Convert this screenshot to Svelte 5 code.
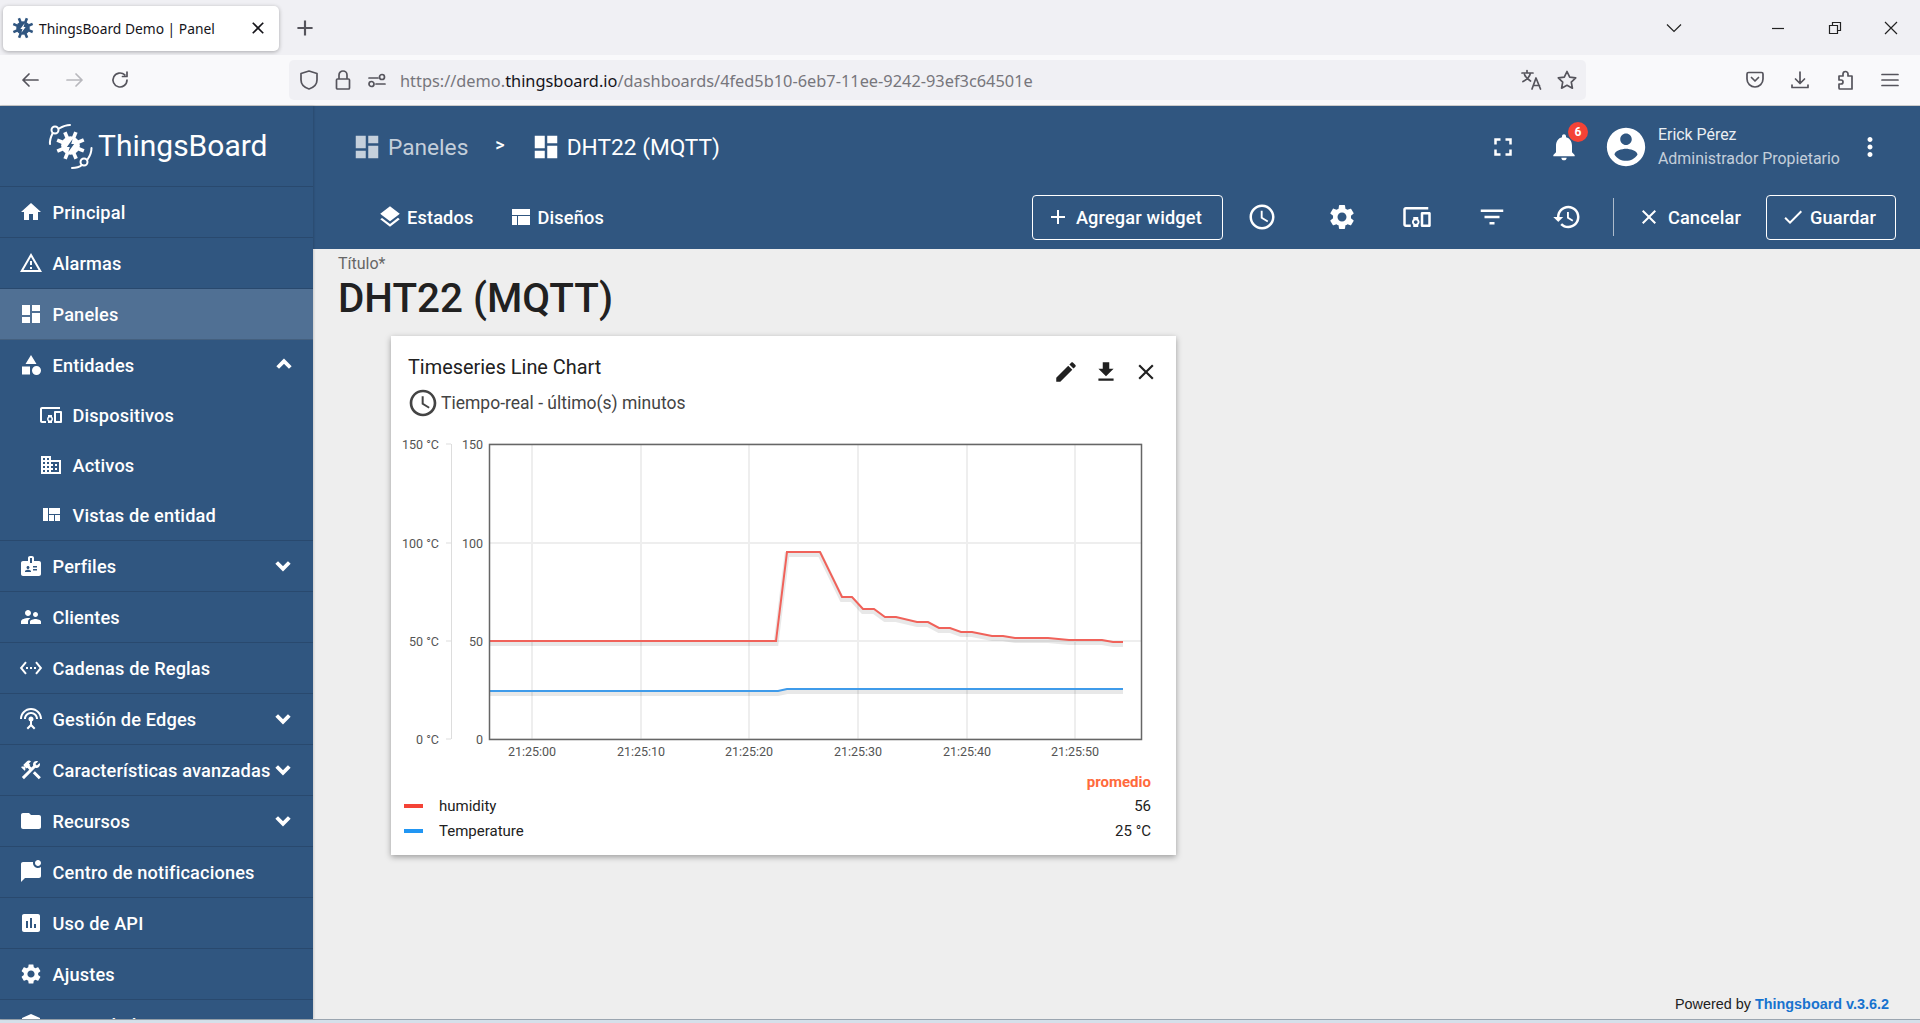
<script>
const I = {
  home: 'M10 20v-6h4v6h5v-8h3L12 3 2 12h3v8z',
  warning: 'M12 5.99L19.53 19H4.47L12 5.99M12 2L1 21h22L12 2zm1 14h-2v2h2v-2zm0-6h-2v4h2v-4z',
  dashboard: 'M3 13h8V3H3v10zm0 8h8v-6H3v6zm10 0h8V11h-8v10zm0-18v6h8V3h-8z',
  category: 'M12 2l-5.5 9h11zM17.5 13a4.5 4.5 0 1 0 0 9 4.5 4.5 0 0 0 0-9zM3 13.5h8v8H3z',
  devices: 'M3 6h18V4H3c-1.1 0-2 .9-2 2v12c0 1.1.9 2 2 2h4v-2H3V6zm10 6H9v1.78c-.61.55-1 1.33-1 2.22s.39 1.67 1 2.22V20h4v-1.78c.61-.55 1-1.34 1-2.22s-.39-1.67-1-2.22V12zm-2 5.5c-.83 0-1.5-.67-1.5-1.5s.67-1.5 1.5-1.5 1.5.67 1.5 1.5-.67 1.5-1.5 1.5zM22 8h-6c-.5 0-1 .5-1 1v10c0 .5.5 1 1 1h6c.5 0 1-.5 1-1V9c0-.5-.5-1-1-1zm-1 10h-4v-8h4v8z',
  domain: 'M12 7V3H2v18h20V7H12zM6 19H4v-2h2v2zm0-4H4v-2h2v2zm0-4H4V9h2v2zm0-4H4V5h2v2zm4 12H8v-2h2v2zm0-4H8v-2h2v2zm0-4H8V9h2v2zm0-4H8V5h2v2zm10 12h-8v-2h2v-2h-2v-2h2v-2h-2V9h8v10zm-2-8h-2v2h2v-2zm0 4h-2v2h2v-2z',
  quilt: 'M10 18h5v-6h-5v6zm-6 0h5V5H4v13zm12 0h5v-6h-5v6zM10 5v6h11V5H10z',
  badge: 'M20 7h-5V4c0-1.1-.9-2-2-2h-2c-1.1 0-2 .9-2 2v3H4c-1.1 0-2 .9-2 2v11c0 1.1.9 2 2 2h16c1.1 0 2-.9 2-2V9c0-1.1-.9-2-2-2zM9 12c.83 0 1.5.67 1.5 1.5S9.83 15 9 15s-1.5-.67-1.5-1.5S8.17 12 9 12zm3 6H6v-.75c0-1 2-1.5 3-1.5s3 .5 3 1.5V18zm1-9h-2V4h2v5zm5 7.5h-4V15h4v1.5zm0-3h-4V12h4v1.5z',
  people: 'M16.5 12c1.38 0 2.49-1.12 2.49-2.5S17.88 7 16.5 7C15.12 7 14 8.12 14 9.5s1.12 2.5 2.5 2.5zM9 11c1.66 0 2.99-1.34 2.99-3S10.66 5 9 5C7.34 5 6 6.34 6 8s1.34 3 3 3zm7.5 3c-1.83 0-5.5.92-5.5 2.75V19h11v-2.25c0-1.83-3.67-2.75-5.5-2.75zM9 13c-2.33 0-7 1.17-7 3.5V19h7v-2.25c0-.85.33-2.34 2.37-3.47C10.5 13.1 9.66 13 9 13z',
  rules: 'M7.77 6.76L6.23 5.48.82 12l5.41 6.52 1.54-1.28L3.42 12l4.35-5.24zM7 13h2v-2H7v2zm10-2h-2v2h2v-2zm-6 2h2v-2h-2v2zm6.77-7.52l-1.54 1.28L20.58 12l-4.35 5.24 1.54 1.28L23.18 12l-5.41-6.52z',
  antenna: 'M12 5c-3.87 0-7 3.13-7 7h2c0-2.76 2.24-5 5-5s5 2.24 5 5h2c0-3.87-3.13-7-7-7zm1 9.29c.88-.39 1.5-1.26 1.5-2.29 0-1.38-1.12-2.5-2.5-2.5S9.5 10.62 9.5 12c0 1.02.62 1.9 1.5 2.29v3.3L7.59 21 9 22.41l3-3 3 3L16.41 21 13 17.59v-3.3zM12 1C5.93 1 1 5.93 1 12h2c0-4.97 4.03-9 9-9s9 4.03 9 9h2c0-6.07-4.93-11-11-11z',
  tools: 'M13.78 15.3l6 6 2.11-2.16-6-6zM17.5 10c1.93 0 3.5-1.57 3.5-3.5 0-.58-.16-1.12-.41-1.6l-2.7 2.7-1.49-1.49 2.7-2.7c-.48-.25-1.02-.41-1.6-.41C15.57 3 14 4.57 14 6.5c0 .41.08.8.21 1.16l-1.85 1.85-1.78-1.78.71-.71-1.41-1.41L12 3.49c-1.17-1.17-3.07-1.17-4.24 0L4.22 7.03l1.41 1.41H2.81l-.71.71 3.54 3.54.71-.71V9.15l1.41 1.41.71-.71 1.78 1.78-7.41 7.41 2.12 2.12L16.34 9.79c.36.13.75.21 1.16.21z',
  folder: 'M10 4H4c-1.1 0-1.99.9-1.99 2L2 18c0 1.1.9 2 2 2h16c1.1 0 2-.9 2-2V8c0-1.1-.9-2-2-2h-8l-2-2z',
  chat: 'M22 6.98V16c0 1.1-.9 2-2 2H6l-4 4V4c0-1.1.9-2 2-2h10.1c-.06.32-.1.66-.1 1 0 2.76 2.24 5 5 5 1.13 0 2.16-.39 3-1.02zM16 3c0 1.66 1.34 3 3 3s3-1.34 3-3-1.34-3-3-3-3 1.34-3 3z',
  chart: 'M19 3H5c-1.1 0-2 .9-2 2v14c0 1.1.9 2 2 2h14c1.1 0 2-.9 2-2V5c0-1.1-.9-2-2-2zM9 17H7v-7h2v7zm4 0h-2V7h2v10zm4 0h-2v-4h2v4z',
  settings: 'M19.14 12.94c.04-.3.06-.61.06-.94 0-.32-.02-.64-.07-.94l2.03-1.58c.18-.14.23-.41.12-.61l-1.92-3.32c-.12-.22-.37-.29-.59-.22l-2.39.96c-.5-.38-1.03-.7-1.62-.94l-.36-2.54c-.04-.24-.24-.41-.48-.41h-3.84c-.24 0-.43.17-.47.41l-.36 2.54c-.59.24-1.13.57-1.62.94l-2.39-.96c-.22-.08-.47 0-.59.22L2.74 8.87c-.12.21-.08.47.12.61l2.03 1.58c-.05.3-.09.63-.09.94s.02.64.07.94l-2.03 1.58c-.18.14-.23.41-.12.61l1.92 3.32c.12.22.37.29.59.22l2.39-.96c.5.38 1.03.7 1.62.94l.36 2.54c.05.24.24.41.48.41h3.84c.24 0 .44-.17.47-.41l.36-2.54c.59-.24 1.13-.56 1.62-.94l2.39.96c.22.08.47 0 .59-.22l1.92-3.32c.12-.22.07-.47-.12-.61l-2.01-1.58zM12 15.6c-1.98 0-3.6-1.62-3.6-3.6s1.62-3.6 3.6-3.6 3.6 1.62 3.6 3.6-1.62 3.6-3.6 3.6z',
  more: 'M16.59 8.59L12 13.17 7.41 8.59 6 10l6 6 6-6z',
  less: 'M12 8l-6 6 1.41 1.41L12 10.83l4.59 4.58L18 14z',
  layers: 'M11.99 18.54l-7.37-5.73L3 14.07l9 7 9-7-1.63-1.27-7.38 5.74zM12 16l7.36-5.73L21 9l-9-7-9 7 1.63 1.27L12 16z',
  table: 'M3 4h18v6H3zM3 11h5v9H3zM9 11h12v9H9z',
  add: 'M19 13h-6v6h-2v-6H5v-2h6V5h2v6h6v2z',
  schedule: 'M11.99 2C6.47 2 2 6.48 2 12s4.47 10 9.99 10C17.52 22 22 17.52 22 12S17.52 2 11.99 2zM12 20c-4.42 0-8-3.58-8-8s3.58-8 8-8 8 3.58 8 8-3.58 8-8 8zm.5-13H11v6l5.25 3.15.75-1.23-4.5-2.67z',
  filter: 'M10 18h4v-2h-4v2zM3 6v2h18V6H3zm3 7h12v-2H6v2z',
  history: 'M13 3c-4.97 0-9 4.03-9 9H1l3.89 3.89.07.14L9 12H6c0-3.87 3.13-7 7-7s7 3.13 7 7-3.13 7-7 7c-1.93 0-3.68-.79-4.94-2.06l-1.42 1.42C8.27 19.99 10.51 21 13 21c4.97 0 9-4.03 9-9s-4.03-9-9-9zm-1 5v5l4.28 2.54.72-1.21-3.5-2.08V8H12z',
  close: 'M19 6.41L17.59 5 12 10.59 6.41 5 5 6.41 10.59 12 5 17.59 6.41 19 12 13.41 17.59 19 19 17.59 13.41 12z',
  check: 'M9 16.17L4.83 12l-1.42 1.41L9 19 21 7l-1.41-1.41z',
  fullscreen: 'M7 14H5v5h5v-2H7v-3zm-2-4h2V7h3V5H5v5zm12 7h-3v2h5v-5h-2v3zM14 5v2h3v3h2V5h-5z',
  bell: 'M12 22c1.1 0 2-.9 2-2h-4c0 1.1.89 2 2 2zm6-6v-5c0-3.07-1.64-5.64-4.5-6.32V4c0-.83-.67-1.5-1.5-1.5s-1.5.67-1.5 1.5v.68C7.63 5.36 6 7.92 6 11v5l-2 2v1h16v-1l-2-2z',
  account: 'M12 2C6.48 2 2 6.48 2 12s4.48 10 10 10 10-4.48 10-10S17.52 2 12 2zm0 3c1.66 0 3 1.34 3 3s-1.34 3-3 3-3-1.34-3-3 1.34-3 3-3zm0 14.2c-2.5 0-4.71-1.28-6-3.22.03-1.99 4-3.08 6-3.08 1.99 0 5.97 1.09 6 3.08-1.29 1.94-3.5 3.22-6 3.22z',
  dots: 'M12 8c1.1 0 2-.9 2-2s-.9-2-2-2-2 .9-2 2 .9 2 2 2zm0 2c-1.1 0-2 .9-2 2s.9 2 2 2 2-.9 2-2-.9-2-2-2zm0 6c-1.1 0-2 .9-2 2s.9 2 2 2 2-.9 2-2-.9-2-2-2z',
  edit: 'M3 17.25V21h3.75L17.81 9.94l-3.75-3.75L3 17.25zM20.71 7.04c.39-.39.39-1.02 0-1.41l-2.34-2.34c-.39-.39-1.02-.39-1.41 0l-1.83 1.83 3.75 3.75 1.83-1.83z',
  download: 'M19 9h-4V3H9v6H5l7 7 7-7zM5 18v2h14v-2H5z',
  security: 'M12 1L3 5v6c0 5.55 3.84 10.74 9 12 5.16-1.26 9-6.45 9-12V5l-9-4z'
};

const menu = [
  { label: 'Principal', icon: 'home' },
  { label: 'Alarmas', icon: 'warning' },
  { label: 'Paneles', icon: 'dashboard', active: true },
  { label: 'Entidades', icon: 'category', open: true, children: [
    { label: 'Dispositivos', icon: 'devices' },
    { label: 'Activos', icon: 'domain' },
    { label: 'Vistas de entidad', icon: 'quilt' }
  ] },
  { label: 'Perfiles', icon: 'badge', arrow: true },
  { label: 'Clientes', icon: 'people' },
  { label: 'Cadenas de Reglas', icon: 'rules' },
  { label: 'Gestión de Edges', icon: 'antenna', arrow: true },
  { label: 'Características avanzadas', icon: 'tools', arrow: true },
  { label: 'Recursos', icon: 'folder', arrow: true },
  { label: 'Centro de notificaciones', icon: 'chat' },
  { label: 'Uso de API', icon: 'chart' },
  { label: 'Ajustes', icon: 'settings' },
  { label: 'Seguridad', icon: 'security' }
];

const humidity = '490,641 776,641 787,552 820,552 842,597 852,597 863,609 874,609 885,617 896,617 917,622 928,622 939,628 950,628 961,632 972,632 992,636 1003,636 1015,638 1048,638 1069,640 1102,640 1113,642 1123,642';
const temperature = '490,691 778,691 787,689 1123,689';
const gridX = [532, 641, 749, 858, 967, 1075];
const xLabels = ['21:25:00', '21:25:10', '21:25:20', '21:25:30', '21:25:40', '21:25:50'];
const gridY = [
  { y: 444, a: '150', b: '150 °C' },
  { y: 543, a: '100', b: '100 °C' },
  { y: 641, a: '50', b: '50 °C' },
  { y: 739, a: '0', b: '0 °C' }
];
const teeth = [0, 45, 90, 135, 180, 225, 270, 315];
</script>

{#snippet icon(name, size = 24)}
  <svg class="icon" width={size} height={size} viewBox="0 0 24 24" fill="currentColor"><path d={I[name]} /></svg>
{/snippet}

{#snippet gear(fill, bolt)}
  <g fill={fill}>
    <circle cx="0" cy="0" r="13" />
    {#each teeth as t}
      <rect x="-2.5" y="-20" width="5" height="9" transform="rotate({t + 22})" />
    {/each}
  </g>
  <path d="M3 -9 L-5 2 L-1 2 L-3 9 L5 -2 L1 -2 Z" fill={bolt} />
{/snippet}

<div class="window">
  <div class="tabbar">
    <div class="tab">
      <svg class="favicon" width="22" height="22" viewBox="-21 -21 42 42">{@render gear('#305680', '#fff')}</svg>
      <span class="tab-title">ThingsBoard Demo | Panel</span>
      <span class="tab-close">{@render icon('close', 20)}</span>
    </div>
    <span class="new-tab">{@render icon('add', 26)}</span>
    <div class="win-controls">
      <svg class="tab-list" width="16" height="10" viewBox="0 0 16 10"><path d="M1 1.5l7 7 7-7" /></svg>
      <svg class="win-btn" width="14" height="14" viewBox="0 0 14 14"><path d="M1 7.5h12" /></svg>
      <svg class="win-btn" width="14" height="14" viewBox="0 0 14 14"><path d="M1.5 4.5h8v8h-8zM4.5 4.5v-3h8v8h-3" /></svg>
      <svg class="win-btn" width="14" height="14" viewBox="0 0 14 14"><path d="M1 1l12 12M13 1L1 13" /></svg>
    </div>
  </div>

  <div class="navbar">
    <div class="nav-left">
      <svg width="20" height="20" viewBox="0 0 20 20"><path d="M18 10H3M9 4l-6 6 6 6" /></svg>
      <svg class="faded" width="20" height="20" viewBox="0 0 20 20"><path d="M2 10h15M11 4l6 6-6 6" /></svg>
      <svg width="20" height="20" viewBox="0 0 20 20"><path d="M17 10a7 7 0 1 1-2.2-5.1M17 2v4.5h-4.5" /></svg>
    </div>
    <div class="urlbar">
      <svg width="20" height="22" viewBox="0 0 20 22"><path d="M10 2l8 2.5v6.5c0 4.500-3.500 7.500-8 9-4.500-1.500-8-4.500-8-9V4.500z" /></svg>
      <svg width="18" height="22" viewBox="0 0 18 22"><path d="M5 10V6a4 4 0 0 1 8 0v4M3.500 10h11a1 1 0 0 1 1 1v8a1 1 0 0 1-1 1h-11a1 1 0 0 1-1-1v-8a1 1 0 0 1 1-1z" /></svg>
      <svg width="20" height="18" viewBox="0 0 20 18"><path d="M2 7h9M9 13h9" /><circle cx="15" cy="6" r="2.500" /><circle cx="4.500" cy="13" r="2.500" /></svg>
      <span class="url">https://demo.<b>thingsboard.io</b>/dashboards/4fed5b10-6eb7-11ee-9242-93ef3c64501e</span>
      <svg class="translate" width="22" height="22" viewBox="0 0 22 22"><path d="M1 4h11M6 1.500V4M9.500 4c-.8 3.500-3.500 6.500-7.500 8.500M3.500 5.500c1 3 3.500 5 6 6.500M11 20l4-11 4.500 11M12.500 16.500h6" /></svg>
      <svg class="star" width="22" height="22" viewBox="0 0 22 22"><path d="M11 2.500l2.700 5.600 6 .8-4.400 4.200 1.100 6.100L11 16.300 5.600 19.200l1.100-6.100-4.400-4.200 6-.8z" /></svg>
    </div>
    <div class="nav-right">
      <svg width="20" height="20" viewBox="0 0 20 20"><path d="M3.500 2.500h13a1.500 1.500 0 0 1 1.500 1.500v5a8 8 0 0 1-16 0V4a1.500 1.500 0 0 1 1.500-1.500zM6.500 7.500L10 11l3.500-3.500" /></svg>
      <svg width="20" height="20" viewBox="0 0 20 20"><path d="M10 2v11M5.500 9l4.500 4.500L14.500 9M2 15v2.500h16V15" /></svg>
      <svg width="20" height="22" viewBox="0 0 20 22"><path d="M4 7h4V5a2.500 2.500 0 0 1 5 0v2h4v13H5a1 1 0 0 1-1-1v-4h2a2 2 0 0 0 0-4H4z" /></svg>
      <svg width="20" height="20" viewBox="0 0 20 20"><path d="M2 4.500h16M2 10h16M2 15.500h16" /></svg>
    </div>
  </div>

  <div class="app">
    <aside class="sidebar">
      <div class="logo">
        <svg width="48" height="48" viewBox="47 122 48 48">
          <g transform="translate(70.500 145.500) scale(.72)">{@render gear('#fff', '#305680')}</g>
          <path class="orbit" d="M50 144c-.5-4 .8-7 2.500-10.500M59 128.500c3.500-2 7-3.500 11-3.500M72 168c4 0 7.500-1 10-3M87.500 159.500c2.500-3.500 4-7.500 4-11.500" />
          <circle class="orbit" cx="55" cy="130" r="3.500" />
          <circle class="orbit" cx="84" cy="162" r="3.500" />
        </svg>
        <span>ThingsBoard</span>
      </div>
      {#each menu as item}
        <div class="row" class:active={item.active} class:open={item.open}>
          <div class="row-main">
            {@render icon(item.icon)}
            <span class="row-label">{item.label}</span>
            {#if item.arrow || item.open}
              <span class="chevron" class:up={item.open}>{@render icon(item.open ? 'less' : 'more', 26)}</span>
            {/if}
          </div>
          {#each item.children ?? [] as child}
            <div class="row-child">
              {@render icon(child.icon)}
              <span class="row-label">{child.label}</span>
            </div>
          {/each}
        </div>
      {/each}
    </aside>

    <div class="main">
      <header class="header">
        <div class="top">
          <div class="crumb faded-crumb">{@render icon('dashboard', 30)}<span>Paneles</span></div>
          <span class="crumb-sep">&gt;</span>
          <div class="crumb">{@render icon('dashboard', 30)}<span>DHT22 (MQTT)</span></div>
          <div class="top-actions">
            <span class="icon-btn">{@render icon('fullscreen', 30)}</span>
            <span class="icon-btn bell">
              {@render icon('bell', 32)}
              <span class="badge">6</span>
            </span>
            <span class="avatar">{@render icon('account', 46)}</span>
            <div class="user">
              <div class="user-name">Erick Pérez</div>
              <div class="user-role">Administrador Propietario</div>
            </div>
            <span class="icon-btn">{@render icon('dots', 30)}</span>
          </div>
        </div>
        <div class="bottom">
          <span class="tool">{@render icon('layers', 26)}Estados</span>
          <span class="tool tool-second">{@render icon('table', 24)}Diseños</span>
          <div class="tool-right">
            <span class="outline add-btn">{@render icon('add', 24)}Agregar widget</span>
            <span class="icon-btn clock">{@render icon('schedule', 30)}</span>
            <span class="icon-btn gear-btn">{@render icon('settings', 30)}</span>
            <span class="icon-btn spaced">{@render icon('devices', 30)}</span>
            <span class="icon-btn spaced">{@render icon('filter', 30)}</span>
            <span class="icon-btn spaced">{@render icon('history', 30)}</span>
            <span class="divider"></span>
            <span class="tool cancel">{@render icon('close', 24)}Cancelar</span>
            <span class="outline save-btn">{@render icon('check', 24)}Guardar</span>
          </div>
        </div>
      </header>

      <div class="content">
        <div class="title-label">Título*</div>
        <h1 class="title">DHT22 (MQTT)</h1>

        <section class="card">
          <div class="card-head">
            <div class="card-text">
              <div class="card-title">Timeseries Line Chart</div>
              <div class="card-sub">{@render icon('schedule', 32)}<span>Tiempo-real - último(s) minutos</span></div>
            </div>
            <div class="card-actions">
              {@render icon('edit', 26)}
              {@render icon('download', 26)}
              {@render icon('close', 26)}
            </div>
          </div>

          <svg class="plot" width="785" height="335" viewBox="391 430 785 335">
            {#each gridX as x}
              <line class="grid" x1={x} x2={x} y1="444" y2="739" />
            {/each}
            {#each gridY as g}
              <line class="grid" class:grid-h={g.y === 543 || g.y === 641} x1="489" x2="1142" y1={g.y} y2={g.y} />
              <line class="grid" x1="446" x2="451" y1={g.y} y2={g.y} />
              <text class="tick" x="439" y={g.y + 4.5} text-anchor="end">{g.b}</text>
              <text class="tick" x="483" y={g.y + 4.5} text-anchor="end">{g.a}</text>
            {/each}
            <line class="grid" x1="451.500" x2="451.500" y1="444" y2="739" />
            {#each xLabels as label, i}
              <text class="tick" x={gridX[i]} y="756" text-anchor="middle">{label}</text>
            {/each}
            <polyline class="shadow" points={humidity} transform="translate(0 2.500)" />
            <polyline class="shadow" points={temperature} transform="translate(0 2.500)" />
            <polyline class="series" points={humidity} stroke="#f0625a" />
            <polyline class="series" points={temperature} stroke="#3f9bea" />
            <rect class="frame" x="489.500" y="444.500" width="652" height="295" />
          </svg>

          <div class="legend">
            <div class="legend-head">promedio</div>
            <div class="legend-row"><i class="swatch red"></i><span>humidity</span><span class="val">56</span></div>
            <div class="legend-row"><i class="swatch blue"></i><span>Temperature</span><span class="val">25 °C</span></div>
          </div>
        </section>

        <footer class="powered">Powered by <a href="#top">Thingsboard v.3.6.2</a></footer>
      </div>
    </div>
  </div>
  <div class="strip"></div>
</div>

<style>
  :global(body) {
    margin: 0;
    background: #eee;
  }
  .window {
    height: 1023px;
    display: flex;
    flex-direction: column;
    overflow: hidden;
    font-family: Roboto, "Liberation Sans", sans-serif;
  }
  .icon {
    display: block;
    flex: none;
  }

  /* browser chrome */
  .tabbar {
    height: 55px;
    flex: none;
    background: #f0f0f4;
    display: flex;
    align-items: center;
    padding-left: 3px;
    box-sizing: border-box;
  }
  .tab {
    width: 276px;
    height: 45px;
    margin-top: 1px;
    box-sizing: border-box;
    padding: 0 11px 0 9px;
    display: flex;
    align-items: center;
    background: #fff;
    border-radius: 5px;
    box-shadow: 0 1px 4px rgba(0, 0, 0, 0.3);
  }
  .favicon {
    flex: none;
    margin-right: 5px;
  }
  .tab-title {
    flex: 1;
    font: 13.8px "Noto Sans", sans-serif;
    color: #15141a;
  }
  .tab-close {
    color: #15141a;
  }
  .new-tab {
    margin-left: 13px;
    color: #55545c;
  }
  .win-controls {
    margin-left: auto;
    display: flex;
    align-items: center;
    padding-right: 22px;
  }
  .win-controls svg {
    fill: none;
    stroke: #222;
    stroke-width: 1.2;
  }
  .tab-list {
    margin-right: 89px;
    stroke: #55545c;
  }
  .win-btn {
    margin-left: 43px;
  }
  .tab-list + .win-btn {
    margin-left: 0;
  }
  .win-btn:last-child {
    margin-left: 42px;
  }
  .navbar {
    height: 51px;
    flex: none;
    box-sizing: border-box;
    background: #f9f9fb;
    border-bottom: 1px solid #ccc;
    display: flex;
    align-items: center;
  }
  .navbar svg {
    flex: none;
    fill: none;
    stroke: #55545c;
    stroke-width: 1.7;
    stroke-linecap: round;
    stroke-linejoin: round;
  }
  .nav-left {
    width: 289px;
    box-sizing: border-box;
    padding-left: 20px;
    display: flex;
    gap: 25px;
  }
  .nav-left .faded {
    stroke: #b8b8bd;
  }
  .urlbar {
    width: 1297px;
    height: 40px;
    box-sizing: border-box;
    background: #f0f0f4;
    border-radius: 5px;
    display: flex;
    align-items: center;
    padding-left: 10px;
    gap: 15px;
  }
  .url {
    flex: 1;
    margin: 2px 0 0 -2px;
    font: 16.35px "Noto Sans", sans-serif;
    color: #77767c;
    white-space: nowrap;
  }
  .url b {
    font-weight: 400;
    color: #15141a;
  }
  .translate {
    margin-right: -2px;
  }
  .star {
    margin-right: 8px;
  }
  .nav-right {
    flex: 1;
    display: flex;
    align-items: center;
    justify-content: flex-end;
    gap: 25px;
    padding-right: 20px;
  }

  /* app shell */
  .app {
    flex: 1;
    min-height: 0;
    display: flex;
  }
  .strip {
    height: 4px;
    flex: none;
    box-sizing: border-box;
    background: #d5e0ea;
    border-top: 1px solid #9aa5b0;
  }
  .sidebar {
    width: 313px;
    flex: none;
    background: #305680;
    color: #fff;
    overflow: hidden;
    box-shadow: 1px 0 2px rgba(0, 0, 0, 0.15);
    z-index: 1;
  }
  .logo {
    height: 81px;
    box-sizing: border-box;
    padding: 0 0 2px 47px;
    display: flex;
    align-items: center;
    gap: 3px;
    border-bottom: 1px solid rgba(0, 0, 0, 0.14);
    font-size: 30px;
  }
  .logo svg {
    margin-top: 2px;
  }
  .orbit {
    fill: none;
    stroke: #fff;
    stroke-width: 2;
    stroke-linecap: round;
  }
  .row {
    border-bottom: 1px solid rgba(0, 0, 0, 0.14);
    font-size: 18.2px;
    font-weight: 500;
    letter-spacing: 0.15px;
  }
  .row.active {
    background: #507094;
  }
  .row-main {
    height: 50px;
    display: flex;
    align-items: center;
    padding-left: 19px;
    gap: 9.5px;
    position: relative;
  }
  .row-label {
    white-space: nowrap;
    padding-top: 1px;
  }
  .chevron {
    position: absolute;
    left: 270px;
    top: 12px;
  }
  .chevron.up {
    left: 271px;
    top: 11px;
  }
  .chevron :global(path) {
    stroke: #fff;
    stroke-width: 1.5;
  }
  .row-child {
    height: 50px;
    display: flex;
    align-items: center;
    padding-left: 39px;
    gap: 9.5px;
  }
  .main {
    flex: 1;
    min-width: 0;
    display: flex;
    flex-direction: column;
  }

  /* header */
  .header {
    background: #305680;
    color: #fff;
    flex: none;
  }
  .top {
    height: 81px;
    display: flex;
    align-items: center;
    padding: 0 30px 0 39px;
    font-size: 22.7px;
  }
  .crumb {
    display: flex;
    align-items: center;
    gap: 6px;
  }
  .crumb span {
    padding-top: 2px;
  }
  .faded-crumb {
    color: rgba(255, 255, 255, 0.72);
  }
  .crumb-sep {
    margin: 0 26px 4px 27px;
    font-size: 18px;
    font-weight: 500;
  }
  .top-actions {
    margin-left: auto;
    display: flex;
    align-items: center;
  }
  .icon-btn {
    width: 40px;
    height: 40px;
    display: flex;
    align-items: center;
    justify-content: center;
    position: relative;
  }
  .bell {
    margin: 0 19px 0 21px;
  }
  .badge {
    position: absolute;
    left: 24px;
    top: -5px;
    width: 20px;
    height: 20px;
    border-radius: 50%;
    background: #f44336;
    font-size: 12px;
    font-weight: 700;
    line-height: 20px;
    text-align: center;
  }
  .avatar {
    margin-right: 9px;
  }
  .user {
    width: 192px;
    font-size: 15.9px;
    line-height: 24px;
  }
  .user-name {
    opacity: 0.9;
  }
  .user-role {
    color: rgba(255, 255, 255, 0.72);
  }
  .bottom {
    height: 62px;
    box-sizing: border-box;
    padding: 0 24px 2px 64px;
    display: flex;
    align-items: center;
    font-size: 18.2px;
    font-weight: 500;
    letter-spacing: 0.15px;
  }
  .tool {
    display: flex;
    align-items: center;
    gap: 4px;
  }
  .tool-second {
    margin-left: 36px;
  }
  .tool-right {
    margin-left: auto;
    display: flex;
    align-items: center;
  }
  .outline {
    height: 45px;
    box-sizing: border-box;
    display: flex;
    align-items: center;
    border: 1px solid #fff;
    border-radius: 4px;
    gap: 6px;
  }
  .add-btn {
    width: 191px;
    padding-left: 13px;
  }
  .clock {
    margin-left: 19px;
  }
  .gear-btn {
    margin-left: 40px;
  }
  .spaced {
    margin-left: 35px;
  }
  .divider {
    width: 1px;
    height: 38px;
    margin: 0 23px 0 26px;
    background: rgba(255, 255, 255, 0.6);
  }
  .cancel {
    gap: 7px;
    margin-right: 25px;
  }
  .save-btn {
    width: 130px;
    padding-left: 14px;
    gap: 5px;
  }

  /* content */
  .content {
    flex: 1;
    min-height: 0;
    display: flex;
    flex-direction: column;
    padding: 5px 25px 0;
    background: #eee;
  }
  .title-label {
    font-size: 16px;
    line-height: 20px;
    color: #666;
  }
  .title {
    margin: 1px 0 13px;
    font-size: 40.4px;
    line-height: 48px;
    font-weight: 500;
    color: #212121;
  }
  .card {
    width: 785px;
    margin-left: 53px;
    background: #fff;
    box-shadow: 0 2px 6px rgba(0, 0, 0, 0.35);
    color: #212121;
  }
  .card-head {
    height: 94px;
    box-sizing: border-box;
    padding: 20px 17px 0 17px;
    display: flex;
    justify-content: space-between;
  }
  .card-title {
    font-size: 19.9px;
    line-height: 24px;
  }
  .card-sub {
    margin: 7px 0 0 -1px;
    display: flex;
    align-items: center;
    gap: 2px;
    font-size: 17.5px;
    color: #444;
  }
  .card-actions {
    display: flex;
    gap: 14px;
    padding-top: 3px;
    height: 26px;
  }
  .plot {
    display: block;
  }
  .grid {
    stroke: #ddd;
    stroke-width: 1;
  }
  .grid-h {
    stroke: #eee;
    stroke-width: 2;
  }
  .tick {
    font: 12.5px Roboto, sans-serif;
    fill: #545454;
  }
  .shadow {
    fill: none;
    stroke: rgba(0, 0, 0, 0.09);
    stroke-width: 5;
  }
  .series {
    fill: none;
    stroke-width: 2;
  }
  .frame {
    fill: none;
    stroke: #666;
    stroke-width: 1.5;
  }
  .legend {
    padding: 4.5px 25px 11.5px 13px;
    font-size: 15px;
  }
  .legend-head {
    height: 24px;
    line-height: 24px;
    text-align: right;
    font-weight: 700;
    color: #ff6a3c;
  }
  .legend-row {
    height: 25px;
    display: flex;
    align-items: center;
  }
  .swatch {
    width: 19px;
    height: 4px;
    margin-right: 16px;
  }
  .red {
    background: #f44336;
  }
  .blue {
    background: #2196f3;
  }
  .val {
    margin-left: auto;
  }
  .powered {
    margin: auto 6px 7px 0;
    text-align: right;
    font: 14.4px "Liberation Sans", sans-serif;
    color: #212121;
  }
  .powered a {
    color: #1873cf;
    font-weight: 700;
    text-decoration: none;
  }
</style>
